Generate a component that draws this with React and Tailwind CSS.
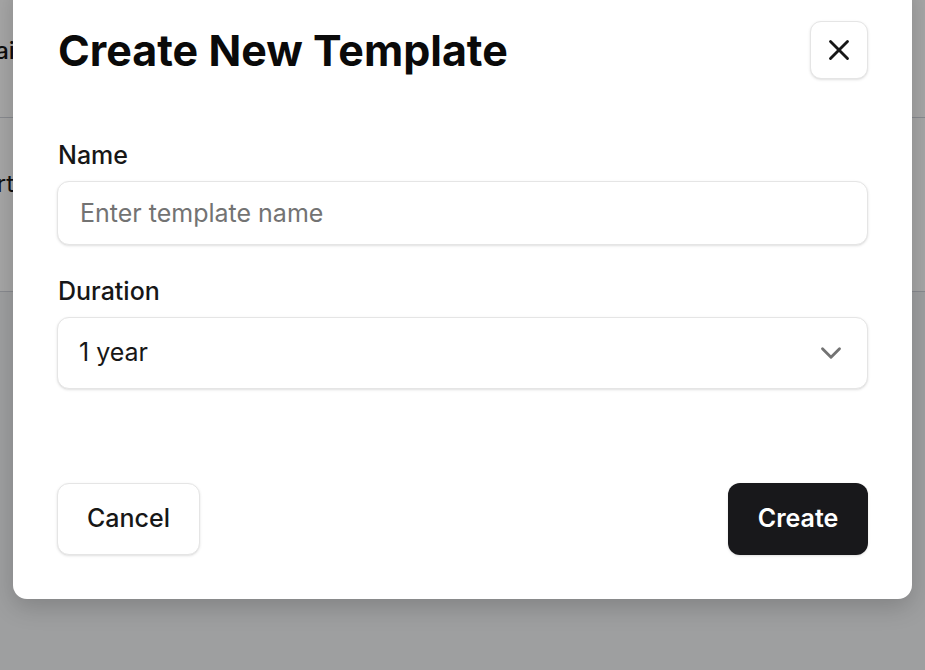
import React, { useState } from "react";
import { X, ChevronDown } from "lucide-react";

const durations = ["1 year", "2 years", "3 years", "5 years"];

export default function App() {
  const [name, setName] = useState("");
  const [duration, setDuration] = useState(durations[0]);

  return (
    <div className="relative h-[670px] w-[925px] overflow-hidden bg-gray-100 font-['Inter',sans-serif] text-neutral-900">
      {/* Page behind the dialog */}
      <div className="bg-white">
        <div className="flex h-[118px] items-center border-b border-gray-300 pb-[16px]">
          <span className="-ml-[58px] text-[24px] font-medium">Domain</span>
        </div>
        <div className="flex h-[174px] items-center border-b border-gray-300 pb-[42px]">
          <span className="-ml-[40px] text-[24px]">Start</span>
        </div>
      </div>

      {/* Overlay */}
      <div className="absolute inset-0 bg-black/35" />

      {/* Dialog */}
      <div className="absolute -top-5 left-[13px] w-[899px] rounded-[14px] bg-white px-[44px] pb-[44px] pt-[41px] shadow-[0_8px_24px_rgba(0,0,0,0.18)]">
        <div className="flex h-[58px] items-center justify-between">
          <h2 className="ml-px text-[43px] font-bold text-neutral-950">
            Create New Template
          </h2>
          <button className="flex h-[58px] w-[58px] items-center justify-center rounded-[11px] border border-neutral-200 bg-white shadow-sm">
            <X size={34} strokeWidth={2} className="text-neutral-900" />
          </button>
        </div>

        <label className="ml-px mt-[60px] block text-[25px] font-medium leading-[32px]">
          Name
        </label>
        <input
          value={name}
          onChange={(e) => setName(e.target.value)}
          placeholder="Enter template name"
          className="mt-[10px] block h-[64px] w-full rounded-[12px] border border-neutral-200 bg-white px-[22px] text-[25px] shadow-sm outline-none placeholder:text-neutral-500"
        />

        <label className="ml-px mt-[30px] block text-[25px] font-medium leading-[32px]">
          Duration
        </label>
        <div className="relative mt-[10px]">
          <select
            value={duration}
            onChange={(e) => setDuration(e.target.value)}
            className="block h-[72px] w-full appearance-none rounded-[12px] border border-neutral-200 bg-white px-[21px] text-[25px] shadow-sm outline-none"
          >
            {durations.map((d) => (
              <option key={d} value={d}>
                {d}
              </option>
            ))}
          </select>
          <ChevronDown
            size={34}
            strokeWidth={2}
            className="pointer-events-none absolute right-[20px] top-[19px] text-neutral-500"
          />
        </div>

        <div className="mt-[94px] flex items-center justify-between">
          <button className="h-[72px] w-[143px] rounded-[12px] border border-neutral-200 bg-white text-[25px] font-medium shadow-sm">
            Cancel
          </button>
          <button className="h-[72px] w-[140px] rounded-[12px] bg-[#18181b] text-[25px] font-semibold text-white shadow-sm">
            Create
          </button>
        </div>
      </div>
    </div>
  );
}
